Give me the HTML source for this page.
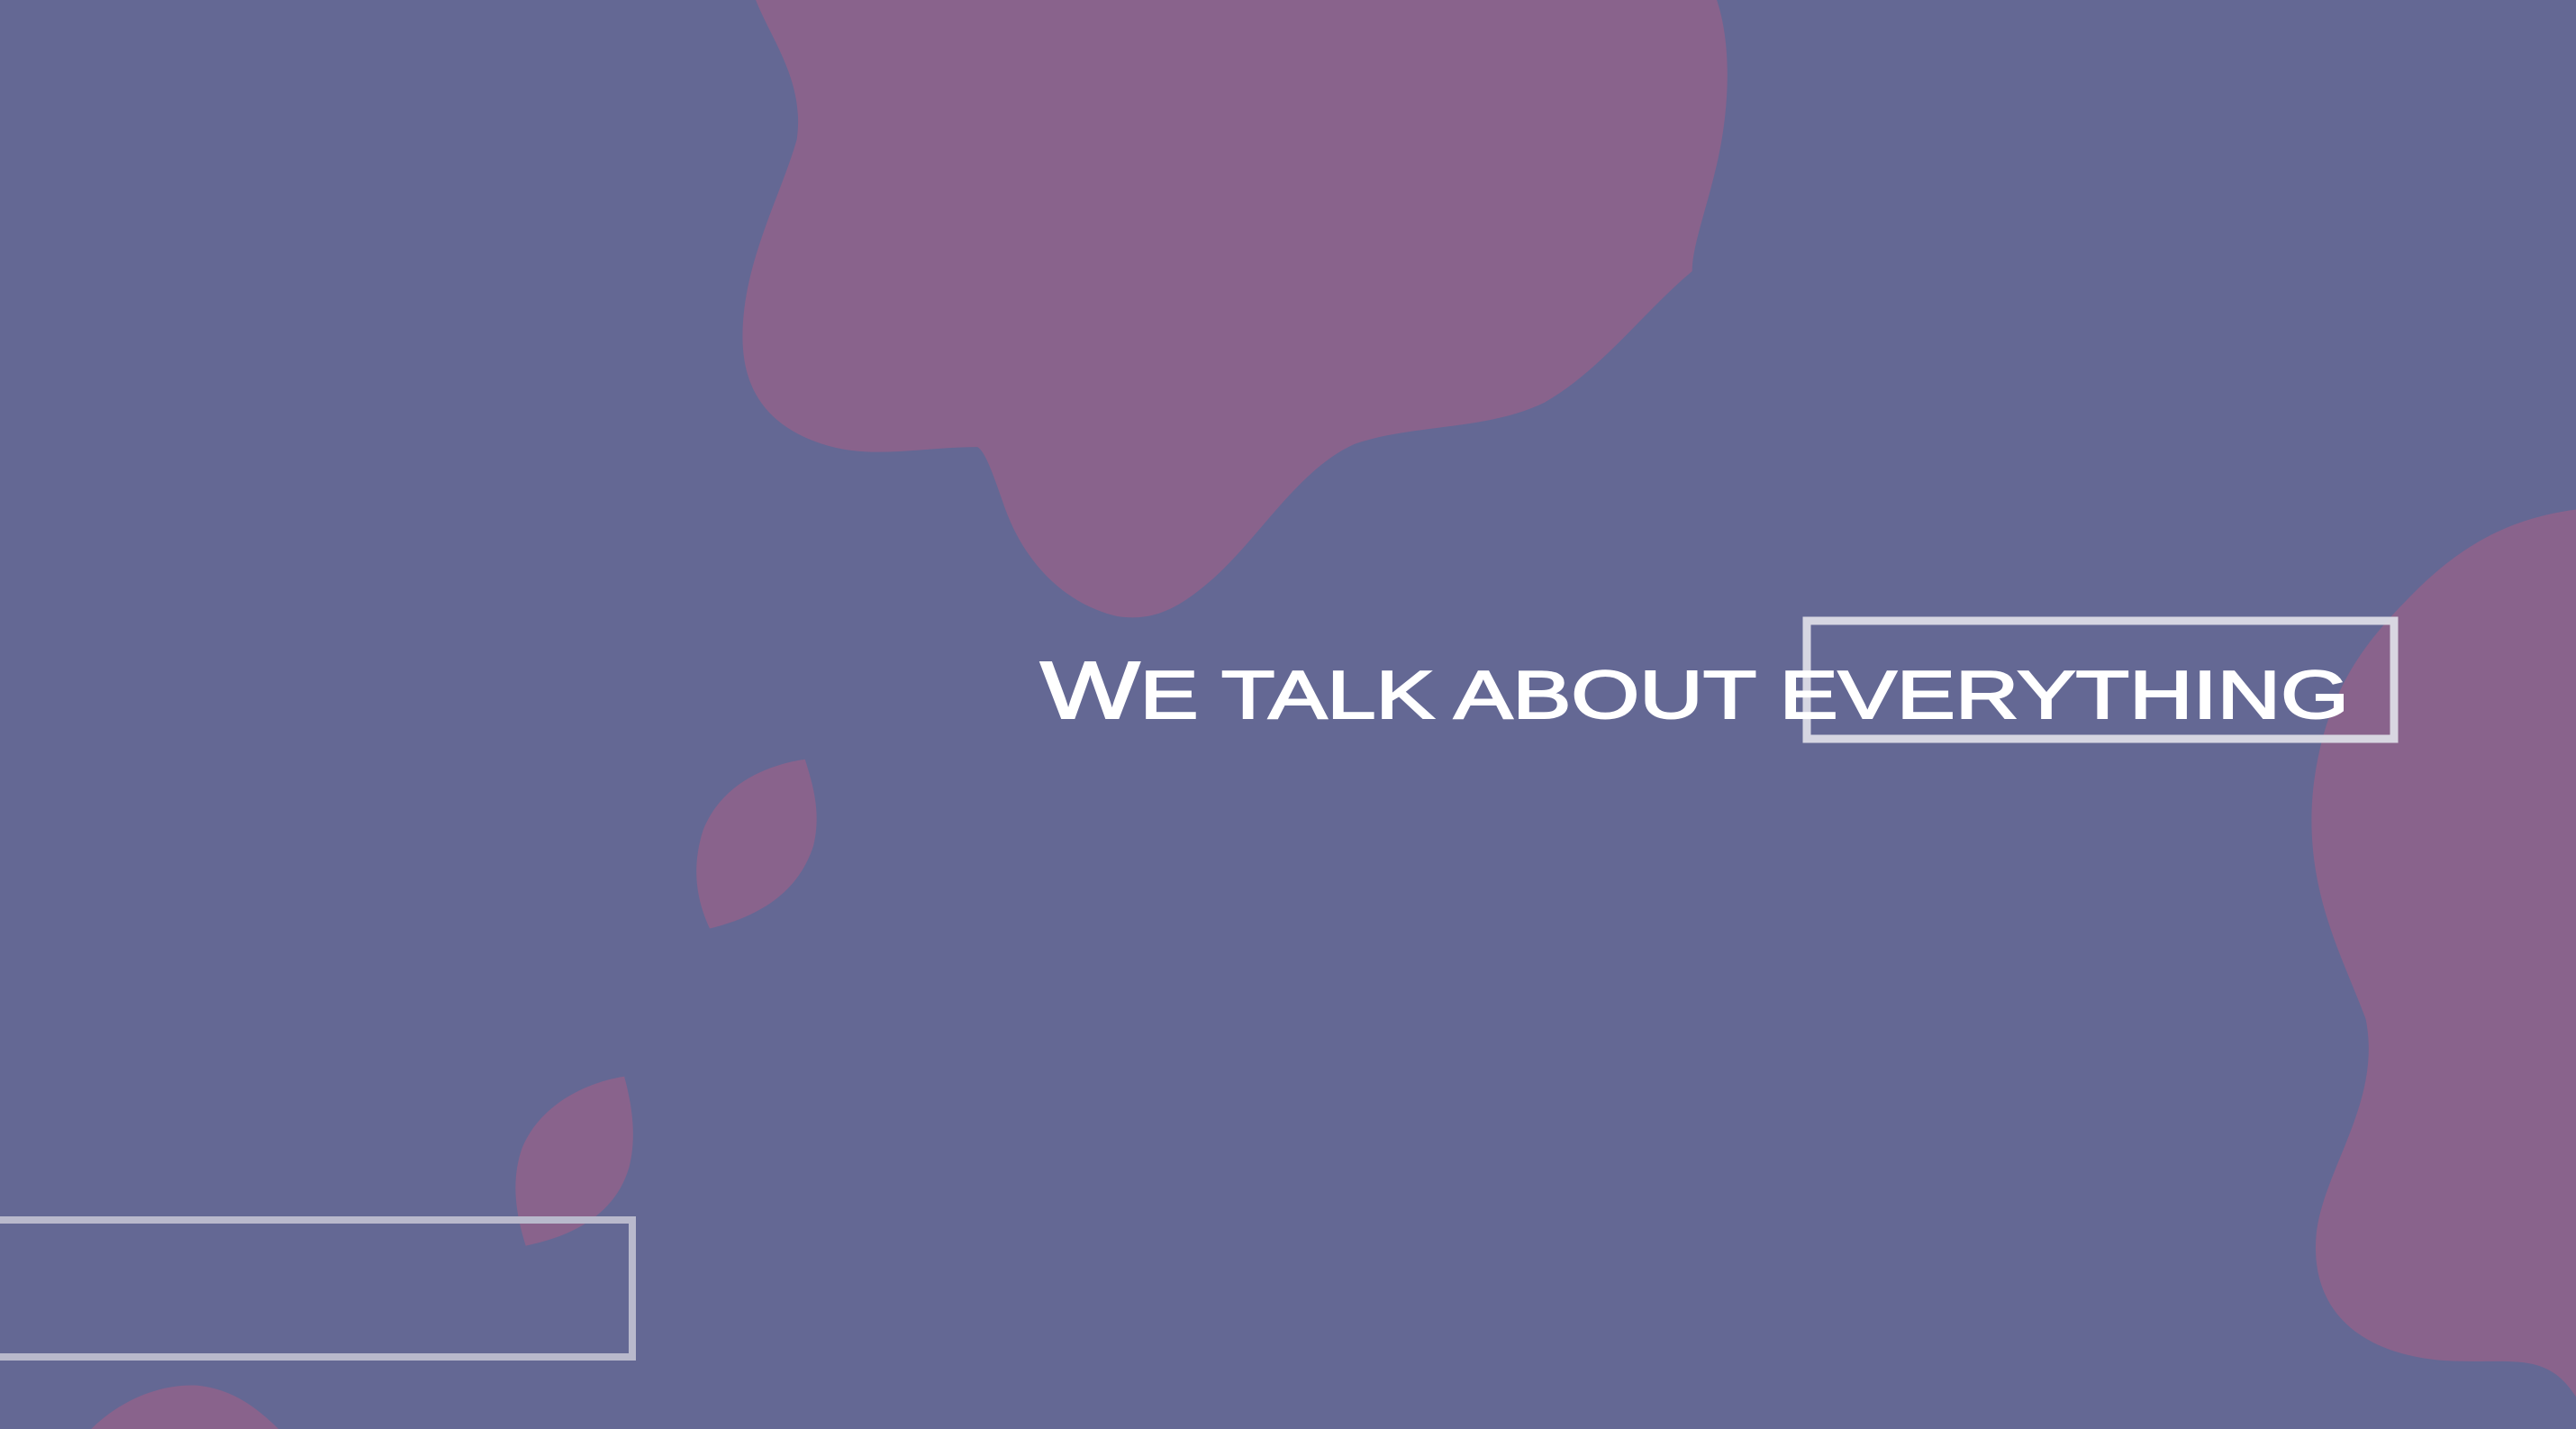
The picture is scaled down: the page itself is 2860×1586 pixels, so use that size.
<!DOCTYPE html>
<html><head><meta charset="utf-8"><style>
html,body{margin:0;padding:0;width:2860px;height:1586px;overflow:hidden;background:#646894}
svg{display:block}
</style></head><body>
<svg width="2860" height="1586" viewBox="0 0 2860 1586" xmlns="http://www.w3.org/2000/svg">
<rect width="2860" height="1586" fill="#646894"/>
<g transform="scale(1.824)" fill="#89638c">
<path d="M460 0 L1045 0 C1055 30 1052 70 1045 100 C1038 130 1030 150 1030 165 C1000 190 975 225 940 245 C905 262 860 258 825 270 C790 285 765 330 735 355 C715 372 700 378 680 375 C650 368 625 345 612 310 C605 290 600 275 595 272 C560 272 530 280 500 270 C470 260 452 240 452 205 C452 160 475 120 485 85 C490 50 470 25 460 0 Z"/>
<path d="M1568 310 C1530 315 1500 330 1470 360 C1440 390 1415 420 1408 480 C1402 540 1425 580 1440 620 C1450 670 1415 710 1410 750 C1405 800 1440 825 1490 828 C1530 830 1550 822 1568 850 Z"/>
<path d="M490 462 C470 465 440 475 428 505 C420 530 425 550 432 565 C460 558 485 545 495 515 C500 495 495 478 490 462 Z"/>
<path d="M380 655 C360 658 330 670 318 698 C310 720 315 742 320 758 C350 752 375 738 383 710 C388 690 384 670 380 655 Z"/>
<path d="M55 870 C75 850 100 842 120 843 C140 845 155 855 170 870 Z"/>
</g>
<rect x="2006" y="689" width="652" height="131" fill="none" stroke="#dcdce6" stroke-width="9" opacity="0.95"/>
<rect x="-10" y="1354" width="712" height="152" fill="none" stroke="#b9b9cc" stroke-width="8"/>
<text x="1155" y="797" fill="#ffffff" stroke="#ffffff" stroke-width="2" font-family="Liberation Sans, sans-serif" font-weight="normal" textLength="1453" lengthAdjust="spacingAndGlyphs"><tspan font-size="90">W</tspan><tspan font-size="75">E TALK ABOUT EVERYTHING</tspan></text>
</svg>
</body></html>
